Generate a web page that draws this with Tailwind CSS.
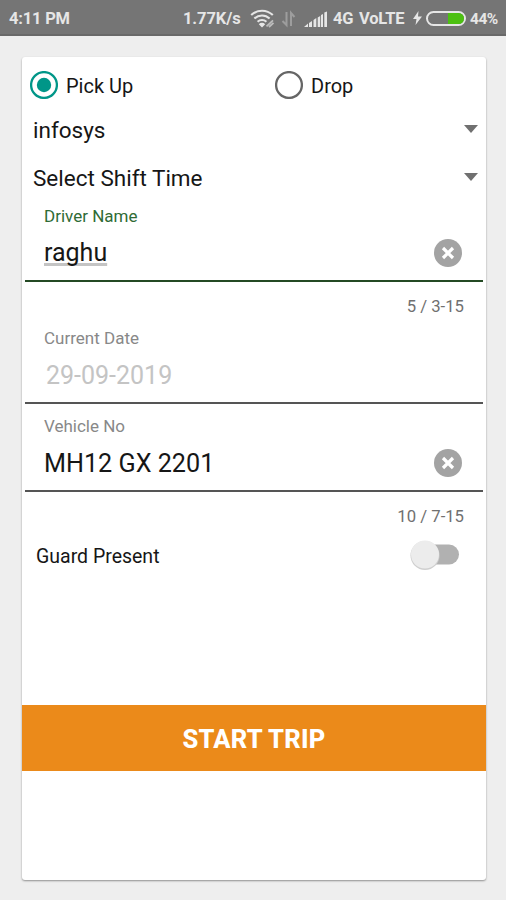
<!DOCTYPE html>
<html lang="en">
<head>
<meta charset="utf-8">
<meta name="viewport" content="width=device-width, initial-scale=1">
<title>Start Trip</title>
<script src="https://cdn.jsdelivr.net/npm/@tailwindcss/browser@4"></script>
</head>
<body class="w-[506px] h-[900px] overflow-hidden bg-[#eeeeee] font-['Roboto',sans-serif] text-[#161616] flex flex-col">
  <header class="h-[36px] shrink-0 bg-[#757575] border-b-2 border-[#696969] flex items-center pl-[9px] pr-[8px] pt-[3px] text-[#e6e6e6] font-bold text-[16.5px] leading-none whitespace-nowrap">
    <span class="pt-[2px] tracking-[-0.2px]">4:11 PM</span>
    <span class="pt-[2px] ml-auto w-[58px] tracking-[-0.1px]">1.77K/s</span>
    <svg class="ml-[9px]" width="26" height="20" viewBox="0 0 26 20" fill="none" stroke="#e6e6e6" stroke-width="2.1">
      <path d="M1.2 6.1a15.500 15.500 0 0 1 21.600 0M4.400 9.500a11 11 0 0 1 15.200 0M7.600 12.700a6.400 6.400 0 0 1 8.800 0"/>
      <path d="M8.800 15.200a4.400 4.400 0 0 1 6.400 0L12 18.500z" fill="#e6e6e6" stroke="none"/>
      <path d="M16.500 17.300l6.500-6M19 18l4.500-4.200" stroke="#bdbdbd" stroke-width="1.800"/>
    </svg>
    <svg class="ml-[5px]" width="16" height="18" viewBox="0 0 16 18" fill="none" stroke="#9d9d9d" stroke-width="2">
      <path d="M5.500 2v13L1.500 11M10 16V3l3.500 4"/>
    </svg>
    <svg class="ml-[7px] mr-[1px]" width="24" height="16" viewBox="0 0 24 16" fill="#e6e6e6">
      <path d="M0 16l4-3.500V16zM5 12l3-2v6H5zM9.500 9l2.800-2v9H9.500zM13.700 6.500l2.500-1.500v11h-2.500zM17 4l2-1v13h-2zM20.300 1.500L23 .5V16h-2.700z"/>
    </svg>
    <span class="pt-[2px] ml-[4px] w-[20px] tracking-[-0.3px]">4G</span>
    <span class="pt-[2px] ml-[6px] w-[45px] tracking-[-0.2px]">VoLTE</span>
    <svg class="ml-[9px] -mt-[2px]" width="9" height="14" viewBox="0 0 9 14" fill="#e6e6e6"><path d="M5.500 0L0 8h3.500L2.500 14 9 5.500H5z"/></svg>
    <span class="ml-[4px] -mt-[1px] w-[40px] h-[15px] rounded-full border-2 border-[#e6e6e6] flex justify-end shrink-0"><span class="w-[16px] h-full bg-[#4cc011] rounded-r-full"></span></span>
    <span class="pt-[2px] ml-[4px] w-[28px] text-[15.5px] tracking-[-0.5px]">44%</span>
  </header>

  <main class="ml-[22px] mr-[20px] mt-[21px] h-[823px] shrink-0 bg-white rounded-[3px] shadow-[0_1px_2px_rgba(0,0,0,0.4)] flex flex-col">
    <div class="h-[49px] pt-[7px] pl-[8px] flex text-[20px] shrink-0">
      <label class="w-[245px] flex items-center h-[41px]">
        <svg width="28" height="28" viewBox="0 0 28 28"><circle cx="14" cy="14" r="12.900" fill="none" stroke="#009688" stroke-width="2.300"/><circle cx="14" cy="14" r="7.200" fill="#009688"/></svg>
        <span class="ml-[8px] pt-[3px]">Pick Up</span>
      </label>
      <label class="flex items-center h-[41px]">
        <svg width="28" height="28" viewBox="0 0 28 28"><circle cx="14" cy="14" r="12.900" fill="none" stroke="#666" stroke-width="2.300"/></svg>
        <span class="ml-[8px] pt-[3px]">Drop</span>
      </label>
    </div>
    <div class="h-[48px] pl-[11px] pr-[8px] flex items-center justify-between text-[22.5px] shrink-0">
      <span class="pt-[2px]">infosys</span>
      <svg class="-mt-[2px]" width="14" height="8" viewBox="0 0 14 8" fill="#707070"><path d="M0 0h14L7 8z"/></svg>
    </div>
    <div class="h-[48px] pl-[11px] pr-[8px] flex items-center justify-between text-[22.5px] shrink-0">
      <span class="pt-[2px]">Select Shift Time</span>
      <svg class="-mt-[2px]" width="14" height="8" viewBox="0 0 14 8" fill="#707070"><path d="M0 0h14L7 8z"/></svg>
    </div>

    <section class="mx-[3px] h-[80px] border-b-2 border-[#244a24] pl-[19px] pr-[21px] flex flex-col shrink-0">
      <span class="h-[28px] leading-[28px] text-[17px] text-[#2f6b35]">Driver Name</span>
      <div class="h-[46px] flex items-center justify-between text-[25px]">
        <span class="underline decoration-[#c4c4c4] decoration-[3px] underline-offset-[2px] [text-decoration-skip-ink:none]">raghu</span>
        <svg width="28" height="28" viewBox="0 0 28 28"><circle cx="14" cy="14" r="14" fill="#a3a3a3"/><path d="M9 9l10 10M19 9L9 19" stroke="#fff" stroke-width="3.200"/></svg>
      </div>
    </section>
    <span class="h-[48px] pt-[13px] pr-[22px] text-right leading-[24px] text-[16.700px] text-[#707070] shrink-0">5 / 3-15</span>

    <section class="mx-[3px] h-[74px] border-b-2 border-[#555] pl-[19px] pr-[21px] flex flex-col shrink-0">
      <span class="h-[16px] leading-[16px] text-[17px] text-[#888]">Current Date</span>
      <span class="h-[56px] leading-[60px] pl-[2px] text-[25px] text-[#c4c4c4]">29-09-2019</span>
    </section>

    <section class="mx-[3px] h-[88px] border-b-2 border-[#555] pl-[19px] pr-[21px] pt-[8px] flex flex-col shrink-0">
      <span class="h-[28px] leading-[28px] text-[17px] text-[#888]">Vehicle No</span>
      <div class="h-[46px] flex items-center justify-between text-[25.200px]">
        <span class="pt-[2px]">MH12 GX 2201</span>
        <svg width="28" height="28" viewBox="0 0 28 28"><circle cx="14" cy="14" r="14" fill="#a3a3a3"/><path d="M9 9l10 10M19 9L9 19" stroke="#fff" stroke-width="3.200"/></svg>
      </div>
    </section>
    <span class="h-[42px] pt-[13px] pr-[22px] text-right leading-[24px] text-[16.700px] text-[#707070] shrink-0">10 / 7-15</span>

    <div class="h-[42px] pl-[14px] pr-[26px] flex items-center justify-between text-[19.500px] shrink-0">
      <span class="pt-[3px]">Guard Present</span>
      <svg class="overflow-visible" width="50" height="32" viewBox="0 0 50 32">
        <rect x="8" y="5.500" width="41" height="20" rx="10" fill="#b1b1b1"/>
        <circle cx="15" cy="16.500" r="14.500" fill="#cfcfcf"/>
        <circle cx="15" cy="15.500" r="14" fill="#ececec"/>
      </svg>
    </div>
    <button class="mt-[129px] h-[66px] pt-[3px] shrink-0 bg-[#eb8a1a] text-white font-extrabold text-[25.500px] tracking-[0.2px]">START TRIP</button>
  </main>
</body>
</html>
